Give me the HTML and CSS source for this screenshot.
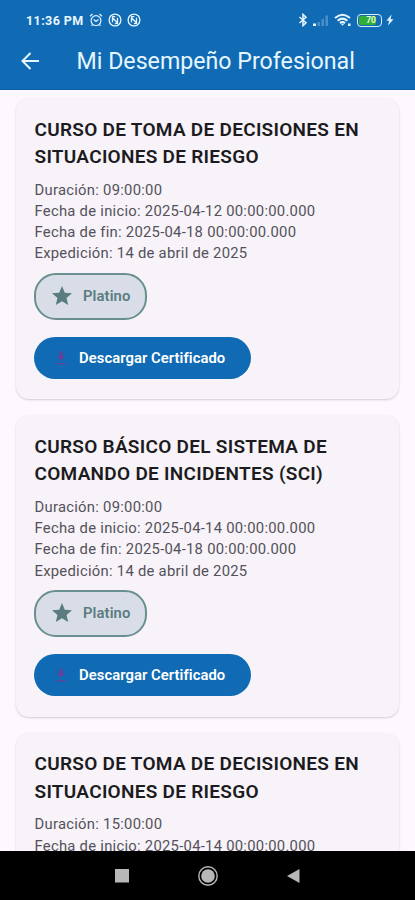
FILE: index.html
```
<!DOCTYPE html>
<html lang="es">
<head>
<meta charset="utf-8">
<title>Mi Desempeño Profesional</title>
<link rel="stylesheet" href="styles.css">
</head>
<body>
<svg class="defs" width="0" height="0" aria-hidden="true">
  <symbol id="star" viewBox="0 0 24 24"><path fill="currentColor" d="M12 17.27 18.18 21l-1.64-7.03L22 9.24l-7.19-.61L12 2 9.19 8.63 2 9.24l5.46 4.73L5.82 21z"/></symbol>
  <symbol id="download" viewBox="0 0 12 16"><path fill="currentColor" d="M4.500 1.500h3V6H10L6 10.400 2 6h2.500zM1.500 13h9v1.300h-9z"/></symbol>
  <symbol id="nfc" viewBox="0 0 14 14"><circle cx="7" cy="7" r="5.900" fill="none" stroke="currentColor" stroke-width="1.300"/><path d="M4.500 9.300V4.800l5 4.800V4.800M4.300 3.600l3 .1M6.900 10.500l2.800-.2" fill="none" stroke="currentColor" stroke-width="1.300"/></symbol>
</svg>
<div class="screen">
  <header class="top">
    <div class="status">
      <span class="time">11:36 PM</span>
      <svg class="alarm" width="14" height="14" viewBox="0 0 14 14" fill="none" stroke="currentColor" stroke-width="1.200"><circle cx="7" cy="7.600" r="4.900"/><path d="M1 3.200 3.500 1M13 3.200 10.500 1M4.700 6.500 7 8.500l2.500-2M3.500 11.500l-1 1.500M10.500 11.500l1 1.500"/></svg>
      <svg class="nfc" width="14" height="14"><use href="#nfc"/></svg>
      <svg class="nfc" width="14" height="14"><use href="#nfc"/></svg>
      <span class="fill"></span>
      <svg class="bt" width="10" height="14" viewBox="0 0 10 14" fill="none" stroke="currentColor" stroke-width="1.500"><path d="M1.500 4 8 9.800 5 12.600V1.400L8 4.200 1.500 10"/></svg>
      <svg class="signal" width="17" height="13" viewBox="0 0 17 13"><path fill="currentColor" d="M1 9.500h3V12H1z"/><path fill="#4b8fc9" d="M5.500 8H8v4H5.500zM9.500 5H12v7H9.500zM13.500 1.500H16V12h-2.500z"/></svg>
      <svg class="wifi" width="18" height="14" viewBox="0 0 18 14" fill="none" stroke="currentColor" stroke-width="2"><path d="M1 5Q8.500-1.500 16 5M3.600 7.700q4.900-4.200 9.800 0M6 10.100q2.500-2 5 0"/><path fill="currentColor" stroke="none" d="M7 11h3l-1.500 1.800zM14 10.500h2.500V13H14z"/></svg>
      <span class="battery"><span class="level">70</span></span>
      <svg class="bolt" width="8" height="12" viewBox="0 0 8 12"><path fill="currentColor" d="M5.500.5.500 6.800h2.700L2 11.500l5.500-6.300H4.600z"/></svg>
    </div>
    <div class="bar">
      <svg class="back" width="20" height="20" viewBox="0 0 20 20" fill="none" stroke="currentColor" stroke-width="2"><path d="M19 10H3M10.500 2 2.500 10l8 8"/></svg>
      <h1>Mi Desempeño Profesional</h1>
    </div>
  </header>
  <main class="list">
    <article class="card">
      <h2>CURSO DE TOMA DE DECISIONES EN<br>SITUACIONES DE RIESGO</h2>
      <p>Duración: 09:00:00</p>
      <p>Fecha de inicio: 2025-04-12 00:00:00.000</p>
      <p>Fecha de fin: 2025-04-18 00:00:00.000</p>
      <p>Expedición: 14 de abril de 2025</p>
      <div class="chip"><svg width="24" height="24"><use href="#star"/></svg><span>Platino</span></div>
      <button><svg width="12" height="16"><use href="#download"/></svg><span>Descargar Certificado</span></button>
    </article>
    <article class="card">
      <h2>CURSO BÁSICO DEL SISTEMA DE<br>COMANDO DE INCIDENTES (SCI)</h2>
      <p>Duración: 09:00:00</p>
      <p>Fecha de inicio: 2025-04-14 00:00:00.000</p>
      <p>Fecha de fin: 2025-04-18 00:00:00.000</p>
      <p>Expedición: 14 de abril de 2025</p>
      <div class="chip"><svg width="24" height="24"><use href="#star"/></svg><span>Platino</span></div>
      <button><svg width="12" height="16"><use href="#download"/></svg><span>Descargar Certificado</span></button>
    </article>
    <article class="card">
      <h2>CURSO DE TOMA DE DECISIONES EN<br>SITUACIONES DE RIESGO</h2>
      <p>Duración: 15:00:00</p>
      <p>Fecha de inicio: 2025-04-14 00:00:00.000</p>
    </article>
  </main>
  <nav class="nav">
    <svg width="16" height="16" viewBox="0 0 16 16"><path fill="#b8b8b8" d="M1 1h14v13.500H1z"/></svg>
    <svg width="22" height="22" viewBox="0 0 22 22"><circle cx="11" cy="11" r="9.200" fill="none" stroke="#b8b8b8" stroke-width="1.400"/><circle cx="11" cy="11" r="6.800" fill="#b8b8b8"/></svg>
    <svg width="16" height="16" viewBox="0 0 16 16"><path fill="#b8b8b8" d="M13.500 1v14L1 8z"/></svg>
  </nav>
</div>
</body>
</html>
```
FILE: styles.css
```
* { box-sizing: border-box; }
body { margin: 0; font-family: Roboto, "Liberation Sans", sans-serif; }
h1, h2, p { margin: 0; }
svg { display: block; flex: none; }
.defs { position: absolute; }
.screen { width: 415px; height: 900px; display: flex; flex-direction: column; overflow: hidden; background: #fdf7ff; }
.top { flex: none; height: 90px; background: #116bb4; border-bottom: 1px solid #0b5ba6; color: #e6f6ff; }
.status { height: 38px; padding: 2px 21px 0 26px; display: flex; align-items: center; }
.time { width: 58px; font-size: 12.500px; font-weight: 700; letter-spacing: .4px; white-space: nowrap; }
.alarm { margin-left: 5px; }
.nfc { margin-left: 5px; }
.fill { flex: 1; }
.signal { margin-left: 4px; }
.wifi { margin-left: 5px; }
.battery { width: 25px; height: 13px; margin-left: 5px; padding: 1px; border: 1.500px solid #d5efff; border-radius: 4px; }
.level { display: block; width: 17px; height: 9px; border-radius: 2px; background: #32ad38; color: #e4ffd6; font-size: 8.500px; font-weight: 700; line-height: 9px; text-align: right; }
.bolt { margin-left: 4px; }
.bar { display: flex; align-items: center; height: 46px; padding-left: 20px; }
.back { margin-right: 36.500px; }
h1 { font-size: 23.200px; font-weight: 400; line-height: 30px; white-space: nowrap; }
.list { flex: 1; min-height: 0; overflow: hidden; padding: 8px 16px 0; display: flex; flex-direction: column; gap: 16px; }
.card { flex: none; height: 301.300px; padding: 17.600px 18px; border-radius: 13px; background: #f7f3f9; box-shadow: 0 1px 2px rgba(60, 50, 70, .22); }
h2 { margin-bottom: 9px; padding-left: .5px; color: #1b1b20; font-size: 19px; font-weight: 600; line-height: 27.600px; letter-spacing: .28px; white-space: nowrap; }
p { padding-left: .5px; color: #54515a; font-size: 14.800px; line-height: 21.200px; letter-spacing: .27px; white-space: nowrap; }
.chip { width: 113px; height: 47px; margin-top: 8px; padding-left: 14px; display: flex; align-items: center; gap: 9px; border: 2px solid #6a8f90; border-radius: 22px; background: #d9dde7; color: #5a7c81; font-size: 14.800px; font-weight: 600; letter-spacing: .1px; }
button { width: 217px; height: 42px; margin-top: 17px; padding: 0 0 0 21px; display: flex; align-items: center; gap: 12px; border: 0; border-radius: 21px; background: #116bb4; color: #fff; font: 600 14.800px Roboto, "Liberation Sans", sans-serif; letter-spacing: .06px; white-space: nowrap; }
button svg { color: #693f9b; }
.nav { flex: none; height: 49px; display: flex; align-items: center; justify-content: center; gap: 67px; background: #000; }
```
